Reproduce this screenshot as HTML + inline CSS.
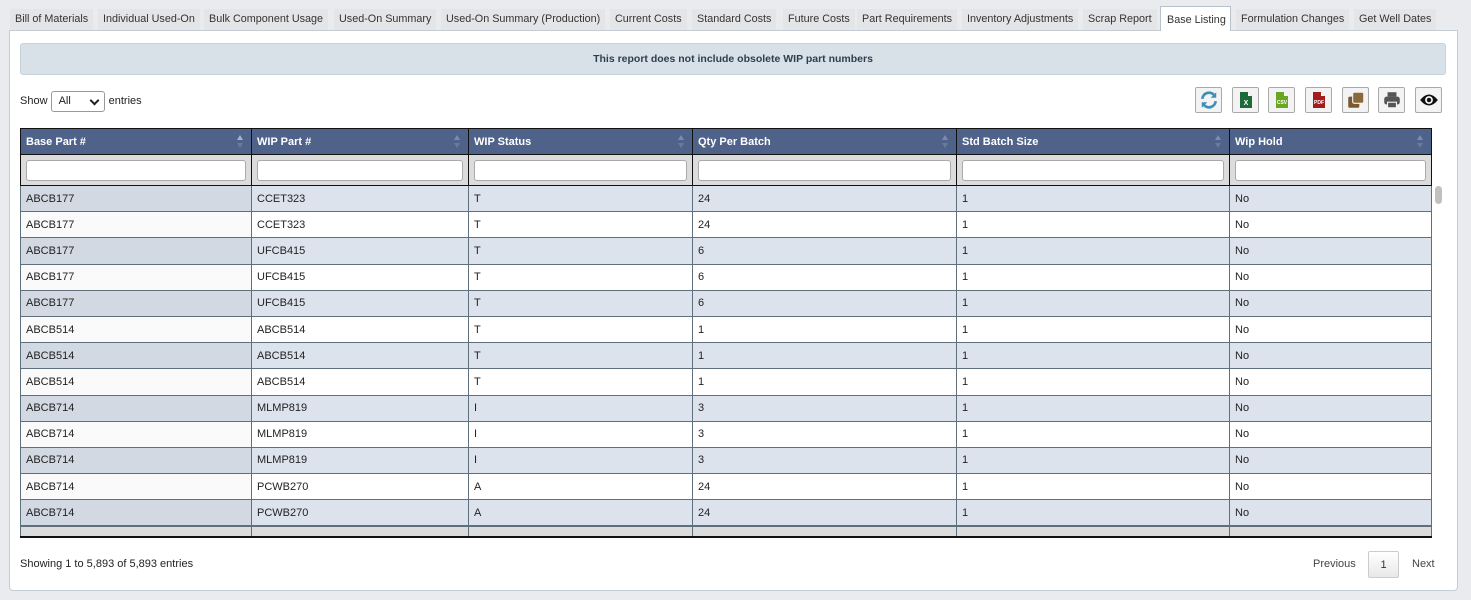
<!DOCTYPE html>
<html><head><meta charset="utf-8"><style>
*{box-sizing:border-box;margin:0;padding:0}
body{width:1471px;height:600px;background:#e9ebee;font-family:"Liberation Sans",Arial,sans-serif;font-size:11px;color:#222;position:relative;overflow:hidden}
.tab{position:absolute;top:9px;height:21px;line-height:20px;background:#e4e5e7;color:#333;font-size:10.8px;padding:0 5px;white-space:nowrap}
.tab.act{background:#fff;border:1px solid #b9c2cc;border-bottom:none;top:6px;height:25px;line-height:26px;z-index:2}
.panel{position:absolute;left:9px;top:30px;width:1449px;height:561px;background:#fff;border:1px solid #c5ccd3;border-radius:0 0 4px 4px}
.alert{position:absolute;left:20px;top:43px;width:1426px;height:32px;background:#d7e1e7;border:1px solid #c6d3da;border-radius:3px;text-align:center;line-height:31px;font-weight:bold;color:#2c3e50;font-size:10.5px}
.show{position:absolute;left:20px;top:90px;height:22px;line-height:22px;font-size:11px}
.sel{display:inline-block;vertical-align:middle;width:54px;height:21px;border:1px solid #999;border-radius:3px;margin:0 1px 0 0;padding-left:7px;line-height:19px;position:relative;background:#fff}
.sel:after{content:"";position:absolute;right:6px;top:5px;width:5px;height:5px;border-right:2px solid #222;border-bottom:2px solid #222;transform:rotate(45deg)}
.btn{position:absolute;top:87px;width:27px;height:26px;border:1px solid #aaa;border-radius:2px;background:#f3f3f3;display:flex;align-items:center;justify-content:center}
table{position:absolute;left:20px;top:128px;width:1411px;border-collapse:collapse;table-layout:fixed}
th{background:#4f6289;color:#fff;text-align:left;height:26px;padding:0 5px;font-size:11px;border:1px solid #111;position:relative}
th:after{content:"";position:absolute;right:8px;top:6px;border-left:3px solid transparent;border-right:3px solid transparent;border-bottom:5px solid #7e8ca8;}
th:before{content:"";position:absolute;right:8px;top:14px;border-left:3px solid transparent;border-right:3px solid transparent;border-top:5px solid #6b7a98;}
th.first:after{border-bottom-color:#a8b2c4}
td.f{background:#dcdcdc;height:31px;padding:0 5px;border:1px solid #111;border-top:none}
td.f div{height:21px;background:#fff;border:1px solid #aaa;border-radius:3px}
td{height:26.2px;padding:0 5px;border:1px solid #5f707c;font-size:11px;white-space:nowrap}
tr.o td{background:#dde3ec}
tr.o td:first-child{background:#d2d9e2}
tr.e td{background:#fff}
tr.e td:first-child{background:#fafafa}
tr.ft td{background:#dcdcdc;height:11px;border-bottom:2px solid #111;border-top:2px solid #5f707c}
.scroll{position:absolute;left:1435px;top:186px;width:7px;height:18px;background:#c1c1c1;border-radius:4px}
.info{position:absolute;left:20px;top:558px;font-size:11px}
.pg{position:absolute;top:551px;height:27px;line-height:27px;font-size:11px;color:#444}
</style></head><body>
<div class="tab" style="left:10px">Bill of Materials</div>
<div class="tab" style="left:98px">Individual Used-On</div>
<div class="tab" style="left:204px">Bulk Component Usage</div>
<div class="tab" style="left:334px">Used-On Summary</div>
<div class="tab" style="left:441px">Used-On Summary (Production)</div>
<div class="tab" style="left:610px">Current Costs</div>
<div class="tab" style="left:692px">Standard Costs</div>
<div class="tab" style="left:783px">Future Costs</div>
<div class="tab" style="left:857px">Part Requirements</div>
<div class="tab" style="left:962px">Inventory Adjustments</div>
<div class="tab" style="left:1083px">Scrap Report</div>
<div class="tab act" style="left:1160px;width:71px;padding:0 6px">Base Listing</div>
<div class="tab" style="left:1236px">Formulation Changes</div>
<div class="tab" style="left:1354px">Get Well Dates</div>
<div class="panel"></div>
<div class="alert">This report does not include obsolete WIP part numbers</div>
<div class="show">Show <span class="sel">All</span> entries</div>

<div class="btn" style="left:1195px"><svg width="20" height="20" viewBox="0 0 18 18"><path d="M3 8a6 6 0 0 1 10.5-3.5" stroke="#3d8fb8" stroke-width="2.4" fill="none"/><path d="M15.5 2v5h-5z" fill="#3d8fb8"/><path d="M15 10a6 6 0 0 1-10.5 3.5" stroke="#3d8fb8" stroke-width="2.4" fill="none"/><path d="M2.5 16v-5h5z" fill="#3d8fb8"/></svg></div>
<div class="btn" style="left:1232px"><svg width="14" height="20" viewBox="0 0 14 18"><path d="M1 1h8l4 4v12H1z" fill="#1e6b3a"/><path d="M9 1v4h4" fill="#fff"/><text x="7" y="14" font-size="7" font-weight="bold" fill="#fff" text-anchor="middle" font-family="Liberation Sans">X</text></svg></div>
<div class="btn" style="left:1268px"><svg width="14" height="20" viewBox="0 0 14 18"><path d="M1 1h8l4 4v12H1z" fill="#6aa523"/><path d="M9 1v4h4" fill="#fff"/><text x="7" y="13" font-size="5" font-weight="bold" fill="#fff" text-anchor="middle" font-family="Liberation Sans">CSV</text></svg></div>
<div class="btn" style="left:1305px"><svg width="14" height="20" viewBox="0 0 14 18"><path d="M1 1h8l4 4v12H1z" fill="#a51c1c"/><path d="M9 1v4h4" fill="#fff"/><text x="7" y="13" font-size="5" font-weight="bold" fill="#fff" text-anchor="middle" font-family="Liberation Sans">PDF</text></svg></div>
<div class="btn" style="left:1342px"><svg width="20" height="20" viewBox="0 0 18 18"><rect x="2" y="6" width="10" height="10" rx="1.5" fill="#7a5a32"/><rect x="6" y="2" width="10" height="10" rx="1.5" fill="#8a6a3a" stroke="#f3f3f3" stroke-width="1"/></svg></div>
<div class="btn" style="left:1378px"><svg width="20" height="20" viewBox="0 0 18 18"><rect x="5" y="2" width="8" height="4" fill="#555"/><rect x="2" y="6" width="14" height="7" rx="2" fill="#555"/><rect x="5" y="11" width="8" height="5" fill="#555" stroke="#f3f3f3"/></svg></div>
<div class="btn" style="left:1415px"><svg width="20" height="20" viewBox="0 0 18 18"><path d="M1 9q8-10 16 0q-8 10-16 0z" fill="#111"/><circle cx="9" cy="9" r="3.5" fill="#fff"/><circle cx="9" cy="9" r="2" fill="#111"/></svg></div>

<table>
<colgroup><col style="width:231px"><col style="width:217px"><col style="width:224px"><col style="width:264px"><col style="width:273px"><col style="width:202px"></colgroup>
<tr><th class="first">Base Part #</th><th>WIP Part #</th><th>WIP Status</th><th>Qty Per Batch</th><th>Std Batch Size</th><th>Wip Hold</th></tr>
<tr><td class="f"><div></div></td><td class="f"><div></div></td><td class="f"><div></div></td><td class="f"><div></div></td><td class="f"><div></div></td><td class="f"><div></div></td></tr>
<tr class="o"><td>ABCB177</td><td>CCET323</td><td>T</td><td>24</td><td>1</td><td>No</td></tr>
<tr class="e"><td>ABCB177</td><td>CCET323</td><td>T</td><td>24</td><td>1</td><td>No</td></tr>
<tr class="o"><td>ABCB177</td><td>UFCB415</td><td>T</td><td>6</td><td>1</td><td>No</td></tr>
<tr class="e"><td>ABCB177</td><td>UFCB415</td><td>T</td><td>6</td><td>1</td><td>No</td></tr>
<tr class="o"><td>ABCB177</td><td>UFCB415</td><td>T</td><td>6</td><td>1</td><td>No</td></tr>
<tr class="e"><td>ABCB514</td><td>ABCB514</td><td>T</td><td>1</td><td>1</td><td>No</td></tr>
<tr class="o"><td>ABCB514</td><td>ABCB514</td><td>T</td><td>1</td><td>1</td><td>No</td></tr>
<tr class="e"><td>ABCB514</td><td>ABCB514</td><td>T</td><td>1</td><td>1</td><td>No</td></tr>
<tr class="o"><td>ABCB714</td><td>MLMP819</td><td>I</td><td>3</td><td>1</td><td>No</td></tr>
<tr class="e"><td>ABCB714</td><td>MLMP819</td><td>I</td><td>3</td><td>1</td><td>No</td></tr>
<tr class="o"><td>ABCB714</td><td>MLMP819</td><td>I</td><td>3</td><td>1</td><td>No</td></tr>
<tr class="e"><td>ABCB714</td><td>PCWB270</td><td>A</td><td>24</td><td>1</td><td>No</td></tr>
<tr class="o"><td>ABCB714</td><td>PCWB270</td><td>A</td><td>24</td><td>1</td><td>No</td></tr>
<tr class="ft"><td></td><td></td><td></td><td></td><td></td><td></td></tr>
</table>
<div class="scroll"></div>
<div class="info">Showing 1 to 5,893 of 5,893 entries</div>
<div class="pg" style="left:1313px">Previous</div>
<div class="pg" style="left:1368px;width:31px;text-align:center;border:1px solid #ccc;border-radius:2px;background:linear-gradient(#fff,#e8e8e8);color:#333">1</div>
<div class="pg" style="left:1412px">Next</div>
</body></html>
